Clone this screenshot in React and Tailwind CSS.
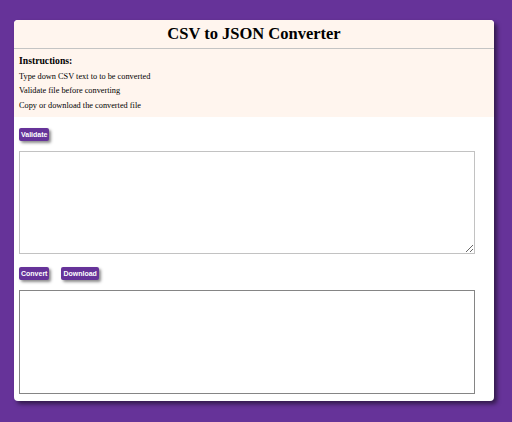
import { useState } from "react";

const btn =
  "bg-[#663399] text-white font-bold text-[7px] leading-[9px] px-[2px] py-[2px] rounded-[2px] shadow-[2px_2px_3px_rgba(0,0,0,0.45)] font-['Liberation_Sans',Arial,sans-serif]";

export default function App() {
  const [csv, setCsv] = useState("");
  const [json, setJson] = useState("");

  return (
    <div className="min-h-screen bg-[#663399] pt-[20px] px-[14px] font-['Liberation_Serif','Times_New_Roman',serif] text-black">
      <div className="w-[480px] bg-white rounded-[4px] shadow-[3px_3px_4px_rgba(0,0,0,0.5)] overflow-hidden pb-[7px]">
        {/* Header */}
        <div className="h-[29px] bg-[#fff5ee] flex items-center justify-center border-b border-[#c4c4c4]">
          <h1 className="text-[16.5px] font-bold leading-none">CSV to JSON Converter</h1>
        </div>

        {/* Instructions */}
        <div className="bg-[#fff5ee] pl-[5px] pt-[6px] pb-[4px]">
          <h3 className="text-[9.7px] font-bold leading-[12px]">Instructions:</h3>
          <div className="mt-[2.5px] text-[8.3px] leading-[14.5px]">
            <p>Type down CSV text to to be converted</p>
            <p>Validate file before converting</p>
            <p>Copy or download the converted file</p>
          </div>
        </div>

        <div className="pl-[5px]">
          <div className="mt-[11px] flex">
            <button className={btn}>Validate</button>
          </div>
          <textarea
            value={csv}
            onChange={(e) => setCsv(e.target.value)}
            className="block mt-[10px] w-[456px] h-[103px] border border-[#c2c2c2] bg-white"
          />
          <div className="mt-[13px] flex gap-[12px]">
            <button className={btn}>Convert</button>
            <button className={btn}>Download</button>
          </div>
          <textarea
            value={json}
            onChange={(e) => setJson(e.target.value)}
            readOnly
            className="block mt-[10px] w-[456px] h-[104px] border border-[#858585] bg-white resize-none"
          />
        </div>
      </div>
    </div>
  );
}
